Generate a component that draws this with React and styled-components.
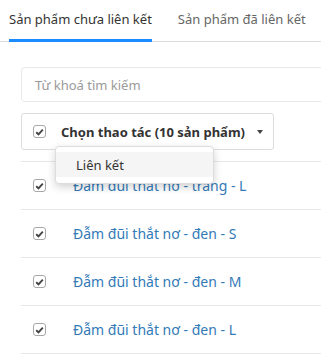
import React from "react"
import styled, { createGlobalStyle } from "styled-components"

const GlobalStyle = createGlobalStyle`
  body {
    margin: 0;
    background: #fff;
    font-family: "Noto Sans", "Open Sans", sans-serif;
    overflow: hidden;
  }
`

const Page = styled.div`
  width: 321px;
  height: 354px;
  overflow: hidden;
`

const Tabs = styled.div`
  display: flex;
  gap: 26px;
  padding-left: 9px;
  height: 41px;
  border-bottom: 1px solid #ddd;
`

const Tab = styled.div`
  display: flex;
  align-items: center;
  font-size: 13px;
  color: ${(p) => (p.active ? "#333" : "#666")};
  white-space: nowrap;
  padding-bottom: 2px;
  border-bottom: 3px solid ${(p) => (p.active ? "#1a8cff" : "transparent")};
  margin-bottom: -1px;
  box-sizing: border-box;
`

const Body = styled.div`
  position: relative;
  padding: 25px 0 0 21px;
`

const Search = styled.div`
  height: 35px;
  width: 320px;
  box-sizing: border-box;
  border: 1px solid #e8e8e8;
  border-radius: 4px;
  display: flex;
  align-items: center;
  padding-left: 13px;
  font-size: 13px;
  color: #9a9a9a;
`

const ActionBox = styled.div`
  margin-top: 11px;
  width: 253px;
  height: 37px;
  box-sizing: border-box;
  border: 1px solid #ddd;
  border-radius: 3px;
  display: flex;
  align-items: center;
  padding-left: 11px;
`

const ActionLabel = styled.span`
  margin-left: 15px;
  font-weight: 700;
  font-size: 13px;
  color: #333;
  white-space: nowrap;
`

const Caret = styled.span`
  margin-left: 12px;
  width: 0;
  height: 0;
  border-left: 3.5px solid transparent;
  border-right: 3.5px solid transparent;
  border-top: 4px solid #444;
`

const Box = styled.span`
  width: 13px;
  height: 13px;
  box-sizing: border-box;
  border: 1px solid #a8a8a8;
  border-radius: 3px;
  background: #fff;
  display: inline-flex;
  align-items: center;
  justify-content: center;
  flex-shrink: 0;
`

const Menu = styled.div`
  position: absolute;
  left: 55px;
  top: 104px;
  width: 159px;
  box-sizing: border-box;
  padding: 5px 0 6px;
  background: #fff;
  border: 1px solid #ddd;
  border-radius: 4px;
  box-shadow: 0 3px 8px rgba(0, 0, 0, 0.18);
  z-index: 2;
`

const MenuItem = styled.div`
  height: 25px;
  display: flex;
  align-items: center;
  padding-left: 20px;
  font-size: 13px;
  color: #333;
  background: ${(p) => (p.hover ? "#f5f5f5" : "transparent")};
`

const List = styled.div`
  margin-top: 11px;
  border-top: 1px solid #e8e8e8;
`

const Row = styled.div`
  height: 48px;
  box-sizing: border-box;
  border-bottom: 1px solid #e8e8e8;
  display: flex;
  align-items: center;
  padding-left: 12px;
`

const Name = styled.a`
  margin-left: 27px;
  font-size: 14px;
  color: #337ab7;
  text-decoration: none;
  white-space: nowrap;
`

const Check = () => (
  <Box>
    <svg width="9" height="8" viewBox="0 0 9 8">
      <path d="M1.2 4.2 L3.5 6.3 L7.8 1.6" fill="none" stroke="#444" strokeWidth="1.9" />
    </svg>
  </Box>
)

const items = [
  "Đẫm đũi thắt nơ - trắng - L",
  "Đẫm đũi thắt nơ - đen - S",
  "Đẫm đũi thắt nơ - đen - M",
  "Đẫm đũi thắt nơ - đen - L",
]

export default function App() {
  return (
    <Page>
      <GlobalStyle />
      <Tabs>
        <Tab active>Sản phẩm chưa liên kết</Tab>
        <Tab>Sản phẩm đã liên kết</Tab>
      </Tabs>
      <Body>
        <Search>Từ khoá tìm kiếm</Search>
        <ActionBox>
          <Check />
          <ActionLabel>Chọn thao tác (10 sản phẩm)</ActionLabel>
          <Caret />
        </ActionBox>
        <Menu>
          <MenuItem hover>Liên kết</MenuItem>
        </Menu>
        <List>
          {items.map((name, i) => (
            <Row key={i}>
              <Check />
              <Name href="#">{name}</Name>
            </Row>
          ))}
        </List>
      </Body>
    </Page>
  )
}
